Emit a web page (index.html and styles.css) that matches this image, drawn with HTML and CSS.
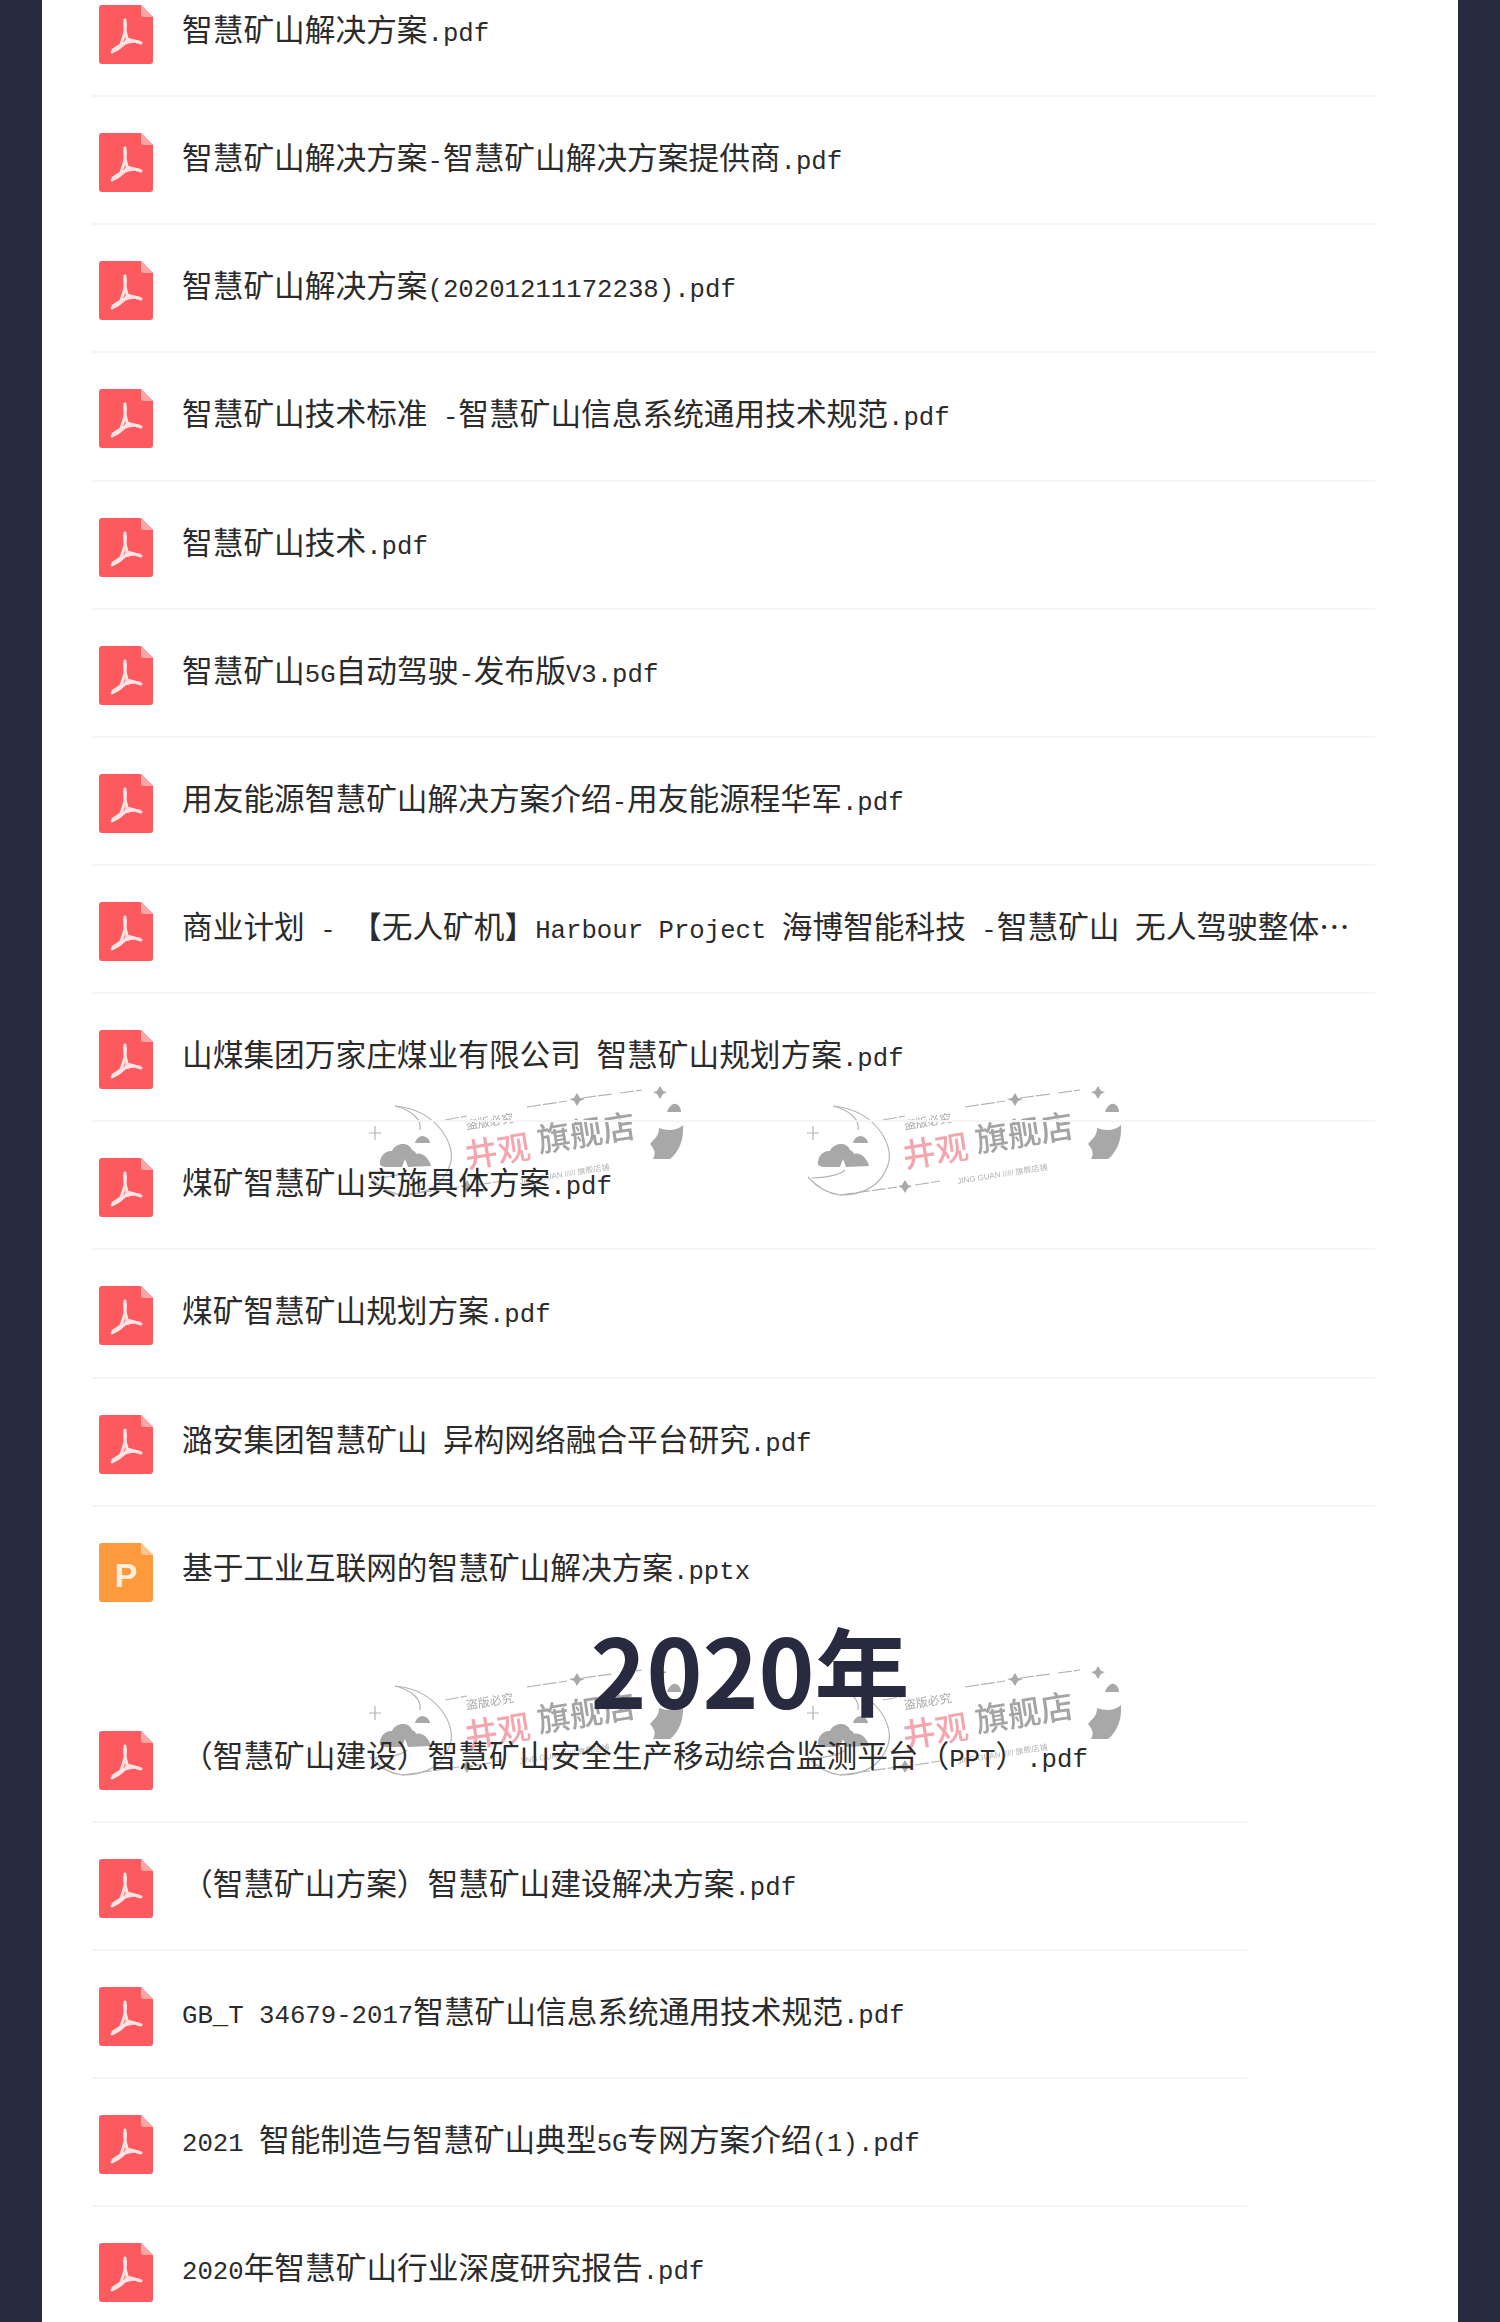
FILE: index.html
```html
<!DOCTYPE html>
<html lang="zh-CN">
<head>
    <meta charset="UTF-8">
    <meta name="viewport" content="width=device-width, initial-scale=1.0">
    <title>智慧矿山资料</title>
    <link rel="stylesheet" href="styles.css">
</head>
<body>

    <!-- Shared icons -->
    <svg class="sprite" aria-hidden="true">
        <symbol id="icon-pdf" viewBox="0 0 54 60">
            <path d="M3 0H42L54 12V56A3 3 0 0 1 51 59H3A3 3 0 0 1 0 56V3A3 3 0 0 1 3 0Z" fill="#fc5a5f"/>
            <path d="M42 0L54 12H45A3 3 0 0 1 42 9Z" fill="#fea5a7"/>
            <path d="M26 15C25 24 27 30 28 33C29 36 22 43 13 47M28 34C32 35 36 36 42 38M14 45C21 40 31 34 40 37M26 15C28 24 25 32 22 39" fill="none" stroke="#fde3e3" stroke-width="3" stroke-linecap="round"/>
        </symbol>
        <symbol id="icon-ppt" viewBox="0 0 54 60">
            <path d="M3 0H42L54 12V56A3 3 0 0 1 51 59H3A3 3 0 0 1 0 56V3A3 3 0 0 1 3 0Z" fill="#fd9a3e"/>
            <path d="M42 0L54 12H45A3 3 0 0 1 42 9Z" fill="#fec48e"/>
            <text x="27" y="44" text-anchor="middle" class="ppt-letter">P</text>
        </symbol>
        <symbol id="watermark" viewBox="0 0 380 160">
            <g fill="none" stroke="#b4b4b4" stroke-width="1.2">
                <path d="M53 46C95 50 115 85 108 105C100 128 80 135 60 135C45 133 35 125 28 117"/>
                <path d="M53 46C70 50 80 60 78 70"/>
                <path d="M32 118C45 118 60 115 65 110"/>
                <path d="M33 66V80M27 73H39"/>
                <path d="M103 60L125 56M185 47L225 41M240 38L270 34M278 33L300 30M60 135L117 127M135 125L160 121" stroke-dasharray="14 2"/>
            </g>
            <g fill="#a8a8a8">
                <path d="M38 105C37 97 43 90 50 91C54 82 67 82 70 90C73 91 74 93 74 94C80 92 87 98 89 106L66 107L63 99L60 107L42 107Z"/>
                <path d="M73 83C74 79 77 76 81 76C85 77 88 80 88 83Z"/>
                <path d="M325 52C327 46 331 43 334 44C337 45 339 48 339 52Z"/>
                <path d="M308 84C313 78 317 76 317 68C325 71 335 71 341 65C342 80 337 92 328 99L311 99C315 92 311 88 308 84Z"/>
                <path d="M235 33L238 38L243 39L238 41L235 46L232 41L227 39L232 38Z"/>
                <path d="M318 26L321 31L325 32L321 34L318 39L315 34L311 32L315 31Z"/>
                <path d="M125 120L128 125L132 126L128 128L125 133L122 128L118 126L122 125Z"/>
            </g>
            <g transform="rotate(-9 200 85)">
                <text x="122" y="96" class="wm-title wm-pink">井观</text>
                <text x="196" y="92" class="wm-title">旗舰店</text>
                <text x="128" y="58" class="wm-small">盗版必究</text>
                <text x="172" y="120" class="wm-tiny">JING GUAN ///// 旗舰店铺</text>
            </g>
        </symbol>
    </svg>

    <div class="page">
        <!-- Watermarks -->
        <svg class="watermark wm-top-left"><use href="#watermark"/></svg>
        <svg class="watermark wm-top-right"><use href="#watermark"/></svg>
        <svg class="watermark wm-bottom-left"><use href="#watermark"/></svg>
        <svg class="watermark wm-bottom-right"><use href="#watermark"/></svg>

        <!-- First file list -->
        <ul class="file-list">
            <li class="file-row"><svg class="file-icon"><use href="#icon-pdf"/></svg><span class="file-name">智慧矿山解决方案<span class="en">.pdf</span></span></li>
            <li class="file-row"><svg class="file-icon"><use href="#icon-pdf"/></svg><span class="file-name">智慧矿山解决方案<span class="en">-</span>智慧矿山解决方案提供商<span class="en">.pdf</span></span></li>
            <li class="file-row"><svg class="file-icon"><use href="#icon-pdf"/></svg><span class="file-name">智慧矿山解决方案<span class="en">(20201211172238).pdf</span></span></li>
            <li class="file-row"><svg class="file-icon"><use href="#icon-pdf"/></svg><span class="file-name">智慧矿山技术标准<span class="en"> -</span>智慧矿山信息系统通用技术规范<span class="en">.pdf</span></span></li>
            <li class="file-row"><svg class="file-icon"><use href="#icon-pdf"/></svg><span class="file-name">智慧矿山技术<span class="en">.pdf</span></span></li>
            <li class="file-row"><svg class="file-icon"><use href="#icon-pdf"/></svg><span class="file-name">智慧矿山<span class="en">5G</span>自动驾驶<span class="en">-</span>发布版<span class="en">V3.pdf</span></span></li>
            <li class="file-row"><svg class="file-icon"><use href="#icon-pdf"/></svg><span class="file-name">用友能源智慧矿山解决方案介绍<span class="en">-</span>用友能源程华军<span class="en">.pdf</span></span></li>
            <li class="file-row"><svg class="file-icon"><use href="#icon-pdf"/></svg><span class="file-name">商业计划<span class="en"> - </span>【无人矿机】<span class="en">Harbour Project </span>海博智能科技<span class="en"> -</span>智慧矿山<span class="en"> </span>无人驾驶整体解决方案<span class="en">.pdf</span></span></li>
            <li class="file-row"><svg class="file-icon"><use href="#icon-pdf"/></svg><span class="file-name">山煤集团万家庄煤业有限公司<span class="en"> </span>智慧矿山规划方案<span class="en">.pdf</span></span></li>
            <li class="file-row"><svg class="file-icon"><use href="#icon-pdf"/></svg><span class="file-name">煤矿智慧矿山实施具体方案<span class="en">.pdf</span></span></li>
            <li class="file-row"><svg class="file-icon"><use href="#icon-pdf"/></svg><span class="file-name">煤矿智慧矿山规划方案<span class="en">.pdf</span></span></li>
            <li class="file-row"><svg class="file-icon"><use href="#icon-pdf"/></svg><span class="file-name">潞安集团智慧矿山<span class="en"> </span>异构网络融合平台研究<span class="en">.pdf</span></span></li>
            <li class="file-row"><svg class="file-icon"><use href="#icon-ppt"/></svg><span class="file-name">基于工业互联网的智慧矿山解决方案<span class="en">.pptx</span></span></li>
        </ul>

        <h2 class="year-title">2020年</h2>

        <!-- Second file list -->
        <ul class="file-list file-list-short">
            <li class="file-row"><svg class="file-icon"><use href="#icon-pdf"/></svg><span class="file-name">（智慧矿山建设）智慧矿山安全生产移动综合监测平台（<span class="en">PPT</span>）<span class="en">.pdf</span></span></li>
            <li class="file-row"><svg class="file-icon"><use href="#icon-pdf"/></svg><span class="file-name">（智慧矿山方案）智慧矿山建设解决方案<span class="en">.pdf</span></span></li>
            <li class="file-row"><svg class="file-icon"><use href="#icon-pdf"/></svg><span class="file-name"><span class="en">GB_T 34679-2017</span>智慧矿山信息系统通用技术规范<span class="en">.pdf</span></span></li>
            <li class="file-row"><svg class="file-icon"><use href="#icon-pdf"/></svg><span class="file-name"><span class="en">2021 </span>智能制造与智慧矿山典型<span class="en">5G</span>专网方案介绍<span class="en">(1).pdf</span></span></li>
            <li class="file-row"><svg class="file-icon"><use href="#icon-pdf"/></svg><span class="file-name"><span class="en">2020</span>年智慧矿山行业深度研究报告<span class="en">.pdf</span></span></li>
        </ul>

        <h2 class="year-title year-title-next">2019年</h2>
    </div>

</body>
</html>
```

FILE: styles.css
```css
html, body {
    margin: 0;
    padding: 0;
    height: 2322px;
    overflow: hidden;
}

body {
    background-color: #282a40;
    font-family: "Noto Sans CJK SC", "Liberation Sans", sans-serif;
    color: #2b2b2b;
}

.sprite {
    display: none;
}

.page {
    position: relative;
    height: 2322px;
    margin: 0 42px;
    padding: 0 50px;
    background-color: #fff;
    overflow: hidden;
}

/* File lists */
.file-list {
    position: relative;
    list-style-type: none;
    width: 1283px;
    margin: -31px 0 0;
    padding: 0;
}

.file-list-short {
    width: 1155px;
    margin-top: 0;
}

.file-row {
    display: flex;
    align-items: flex-start;
    gap: 29px;
    box-sizing: border-box;
    height: 128.15px;
    padding: 36px 25px 0 7px;
    border-bottom: 2px solid #f5f5f5;
}

.file-row:last-child {
    border-bottom: none;
}

.file-icon {
    flex-shrink: 0;
    width: 54px;
    height: 60px;
}

.file-name {
    min-width: 0;
    font-size: 30.7px;
    line-height: 46px;
    white-space: nowrap;
    overflow: hidden;
    text-overflow: ellipsis;
}

.en {
    font-family: "Liberation Mono", monospace;
    font-size: 25.7px;
    white-space: pre;
}

.ppt-letter {
    font-family: "Liberation Sans", sans-serif;
    font-size: 34px;
    font-weight: 700;
    fill: #ffeedd;
}

/* Year headings */
.year-title {
    position: relative;
    height: 60px;
    margin: 0;
    font-size: 95px;
    font-weight: 700;
    line-height: 66px;
    text-align: center;
    color: #282a40;
}

.year-title-next {
    margin-top: -6px;
}

/* Watermarks */
.watermark {
    position: absolute;
    width: 380px;
    height: 160px;
    filter: blur(0.5px);
}

.wm-top-left {
    left: 300px;
    top: 1060px;
}

.wm-top-right {
    left: 738px;
    top: 1060px;
}

.wm-bottom-left {
    left: 300px;
    top: 1640px;
}

.wm-bottom-right {
    left: 738px;
    top: 1640px;
}

.wm-title {
    font-family: "Noto Sans CJK SC", sans-serif;
    font-size: 33px;
    font-weight: 500;
    fill: #a4a4a4;
}

.wm-pink {
    fill: #f4a6ae;
}

.wm-small {
    font-family: "Noto Sans CJK SC", sans-serif;
    font-size: 12px;
    fill: #a8a8a8;
}

.wm-tiny {
    font-family: "Liberation Sans", sans-serif;
    font-size: 8px;
    fill: #b4b4b4;
}
```
